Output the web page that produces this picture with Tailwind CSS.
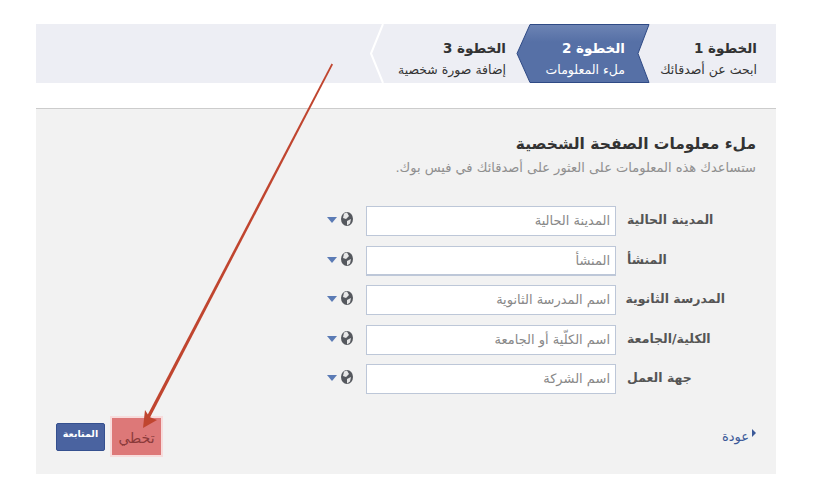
<!DOCTYPE html>
<html lang="ar">
<head>
<meta charset="utf-8">
<script src="https://cdn.jsdelivr.net/npm/@tailwindcss/browser@4"></script>
</head>
<body class="bg-white">
<div class="relative w-[831px] h-[484px] overflow-hidden font-['DejaVu_Sans',sans-serif] pt-6 pl-9">
  <div class="w-[740px]" dir="rtl">
    <!-- steps -->
    <div class="relative h-[59px] bg-[#edeef4] flex">
      <svg class="absolute left-[334px] top-0" width="281" height="59" viewBox="0 0 281 59">
        <defs><linearGradient id="g" x1="0" y1="0" x2="0" y2="1"><stop offset="0" stop-color="#6d84b4"/><stop offset="0.3" stop-color="#5670a6"/><stop offset="1" stop-color="#5670a6"/></linearGradient></defs>
        <polygon points="147,29.5 160,0.5 279,0.5 268,29.5 279,58.500 160,58.500" fill="url(#g)" stroke="#2f4a85" stroke-width="1"/>
        <polyline points="13,0 1,29.5 13,59" fill="none" stroke="#ffffff" stroke-width="2"/>
      </svg>
      <div class="relative w-[129px] pr-[19px] pt-[14px]">
        <div class="text-[13.5px] leading-5 font-bold text-[#333]">الخطوة 1</div>
        <div class="text-[12.5px] leading-4 mt-[4px] text-[#333] whitespace-nowrap">ابحث عن أصدقائك</div>
      </div>
      <div class="relative w-[130px] pr-[22px] pt-[14px]">
        <div class="text-[13.5px] leading-5 font-bold text-white">الخطوة 2</div>
        <div class="text-[12.5px] leading-4 mt-[4px] text-white whitespace-nowrap">ملء المعلومات</div>
      </div>
      <div class="relative pr-[11px] pt-[14px]">
        <div class="text-[13.5px] leading-5 font-bold text-[#333]">الخطوة 3</div>
        <div class="text-[12.5px] leading-4 mt-[4px] text-[#333] whitespace-nowrap">إضافة صورة شخصية</div>
      </div>
    </div>
    <!-- panel -->
    <div class="mt-[25px] h-[366px] bg-[#f2f2f2] border-t border-[#cccccc] pt-[25px] pr-5 pl-5 flex flex-col">
      <h2 class="text-[15.5px] leading-5 font-bold text-[#333]">ملء معلومات الصفحة الشخصية</h2>
      <p class="text-[13px] leading-4 mt-[6px] text-[#8f8f8f]">ستساعدك هذه المعلومات على العثور على أصدقائك في فيس بوك.</p>
      <div class="mt-[30px] flex flex-col gap-[9.5px] pr-[31px]">
        <div class="flex items-center h-[30px]">
          <label class="w-[109px] pl-[11px] text-left text-[12.5px] font-bold text-[#555] -mt-px">المدينة الحالية</label>
          <div class="w-[250px] h-[30px] bg-white border border-[#bdc7d8] px-[5px] text-[13px] leading-7 text-[#888]">المدينة الحالية</div>
          <svg class="mr-[13px] -mt-[4px]" width="26" height="14" viewBox="0 0 26 14">
            <ellipse cx="20" cy="7" rx="6" ry="7" fill="#55585e"/><path d="M17 1.500 l3 -1 l2 3.500 l-3 3 l-3 -1z M20 9 l4 -2 l-1 4.500 l-3 2z" fill="#e8e8e8"/>
            <path d="M0 5 h10 l-5 6z" fill="#5b7bb5"/>
          </svg>
        </div>
        <div class="flex items-center h-[30px]">
          <label class="w-[109px] pl-[11px] text-left text-[12.5px] font-bold text-[#555] -mt-px">المنشأ</label>
          <div class="w-[250px] h-[30px] bg-white border border-[#bdc7d8] border-b-2 px-[5px] text-[13px] leading-7 text-[#888]">المنشأ</div>
          <svg class="mr-[13px] -mt-[4px]" width="26" height="14" viewBox="0 0 26 14">
            <ellipse cx="20" cy="7" rx="6" ry="7" fill="#55585e"/><path d="M17 1.500 l3 -1 l2 3.500 l-3 3 l-3 -1z M20 9 l4 -2 l-1 4.500 l-3 2z" fill="#e8e8e8"/>
            <path d="M0 5 h10 l-5 6z" fill="#5b7bb5"/>
          </svg>
        </div>
        <div class="flex items-center h-[30px]">
          <label class="w-[109px] pl-[11px] text-left text-[12.5px] font-bold text-[#555] -mt-px whitespace-nowrap">المدرسة الثانوية</label>
          <div class="w-[250px] h-[30px] bg-white border border-[#bdc7d8] px-[5px] text-[13px] leading-7 text-[#888]">اسم المدرسة الثانوية</div>
          <svg class="mr-[13px] -mt-[4px]" width="26" height="14" viewBox="0 0 26 14">
            <ellipse cx="20" cy="7" rx="6" ry="7" fill="#55585e"/><path d="M17 1.500 l3 -1 l2 3.500 l-3 3 l-3 -1z M20 9 l4 -2 l-1 4.500 l-3 2z" fill="#e8e8e8"/>
            <path d="M0 5 h10 l-5 6z" fill="#5b7bb5"/>
          </svg>
        </div>
        <div class="flex items-center h-[30px]">
          <label class="w-[109px] pl-[11px] text-left text-[12.5px] font-bold text-[#555] -mt-px">الكلية/الجامعة</label>
          <div class="w-[250px] h-[30px] bg-white border border-[#bdc7d8] px-[5px] text-[13px] leading-7 text-[#888]">اسم الكلّية أو الجامعة</div>
          <svg class="mr-[13px] -mt-[4px]" width="26" height="14" viewBox="0 0 26 14">
            <ellipse cx="20" cy="7" rx="6" ry="7" fill="#55585e"/><path d="M17 1.500 l3 -1 l2 3.500 l-3 3 l-3 -1z M20 9 l4 -2 l-1 4.500 l-3 2z" fill="#e8e8e8"/>
            <path d="M0 5 h10 l-5 6z" fill="#5b7bb5"/>
          </svg>
        </div>
        <div class="flex items-center h-[30px]">
          <label class="w-[109px] pl-[11px] text-left text-[12.5px] font-bold text-[#555] -mt-px">جهة العمل</label>
          <div class="w-[250px] h-[30px] bg-white border border-[#bdc7d8] px-[5px] text-[13px] leading-7 text-[#888]">اسم الشركة</div>
          <svg class="mr-[13px] -mt-[4px]" width="26" height="14" viewBox="0 0 26 14">
            <ellipse cx="20" cy="7" rx="6" ry="7" fill="#55585e"/><path d="M17 1.500 l3 -1 l2 3.500 l-3 3 l-3 -1z M20 9 l4 -2 l-1 4.500 l-3 2z" fill="#e8e8e8"/>
            <path d="M0 5 h10 l-5 6z" fill="#5b7bb5"/>
          </svg>
        </div>
      </div>
      <!-- footer -->
      <div class="mt-[22px] flex items-center justify-between">
        <div class="flex items-center gap-[3px] text-[13px] text-[#3b5998]">
          <svg width="4" height="8" viewBox="0 0 4 8" class="-mt-2"><path d="M0 0 L4 4 L0 8z" fill="#3b5998"/></svg>
          <span>عودة</span>
        </div>
        <div class="flex items-center gap-[5px]">
          <div class="w-[53px] h-[41px] bg-[#dd7878] border-[2px] border-[#f7dcdc] flex items-center justify-center pt-[3px] text-[14px] text-[#8b3a3a]">تخطي</div>
          <div class="w-[49px] h-[28px] rounded-[2px] bg-[#4a63a0] border border-[#35508f] flex items-center justify-center text-[9.5px] font-bold text-white pb-1">المتابعة</div>
        </div>
      </div>
    </div>
  </div>
  <!-- annotation arrow -->
  <svg class="absolute left-0 top-0 pointer-events-none" width="831" height="484" viewBox="0 0 831 484">
    <polygon points="331.500,63.500 333,64.500 149.500,418.500 146.500,417" fill="#c0452f"/>
    <path d="M143 428 L145 410 L149.500 417 L157 420z" fill="#c0452f"/>
  </svg>
</div>
</body>
</html>
